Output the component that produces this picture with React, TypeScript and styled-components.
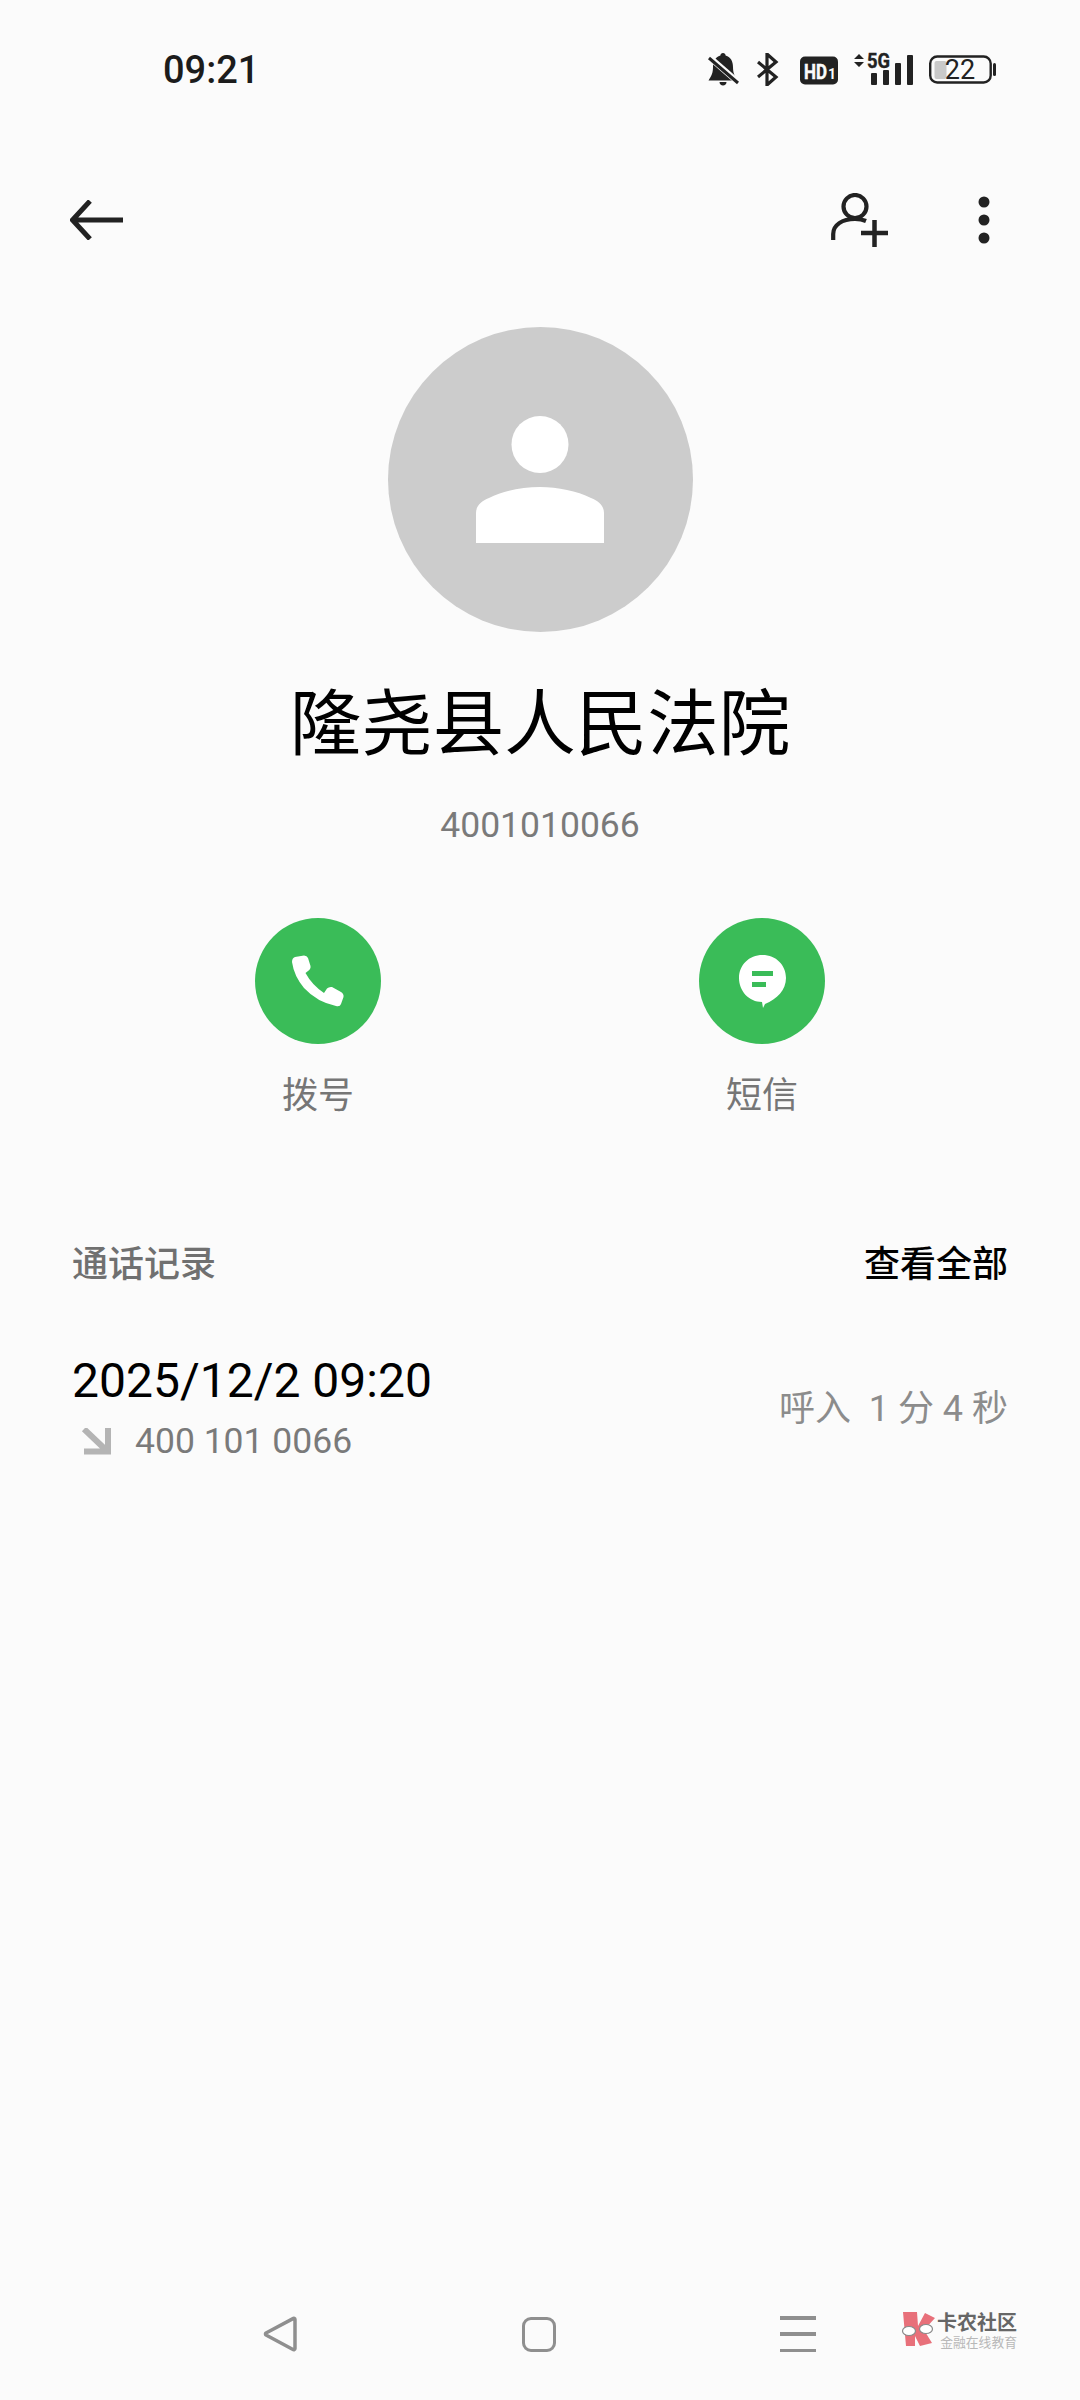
import React from 'react';
import styled, { createGlobalStyle } from 'styled-components';

const GlobalStyle = createGlobalStyle`
  html, body {
    margin: 0;
    padding: 0;
    background: #fbfbfb;
  }
  * {
    box-sizing: border-box;
  }
`;

const FONT = `Roboto, "Noto Sans CJK SC", sans-serif`;

const Page = styled.div`
  width: 1080px;
  height: 2400px;
  display: flex;
  flex-direction: column;
  background: #fbfbfb;
  font-family: ${FONT};
  overflow: hidden;
`;

const StatusBar = styled.div`
  height: 138px;
  flex: none;
  display: flex;
  align-items: center;
  justify-content: space-between;
  padding: 0 84px 0 163px;
`;

const Clock = styled.span`
  font-size: 38px;
  line-height: 42px;
  padding-top: 2px;
  font-weight: 500;
  color: #1c1c1c;
`;

const StatusIcons = styled.div`
  display: flex;
  align-items: center;
  gap: 16px;
`;

const Toolbar = styled.div`
  height: 164px;
  flex: none;
  display: flex;
  align-items: center;
  padding: 0 90px 0 70px;
`;

const ToolbarRight = styled.div`
  margin-left: auto;
  display: flex;
  align-items: center;
  gap: 90px;
`;

const Profile = styled.div`
  display: flex;
  flex-direction: column;
  align-items: center;
  padding-top: 25px;
`;

const Avatar = styled.div`
  width: 305px;
  height: 305px;
  border-radius: 50%;
  background: #cccccc;
  display: flex;
  align-items: center;
  justify-content: center;
`;

const Name = styled.h1`
  margin: 43px 0 0;
  font-size: 71.5px;
  line-height: 100px;
  font-weight: 400;
  color: #000;
`;

const Phone = styled.div`
  margin-top: 25px;
  font-size: 35.5px;
  line-height: 50px;
  color: #7a7a7a;
`;

const Actions = styled.div`
  margin-top: 68px;
  display: grid;
  grid-template-columns: 126px 126px;
  justify-content: center;
  column-gap: 318px;
`;

const Action = styled.div`
  display: flex;
  flex-direction: column;
  align-items: center;
  gap: 27px;
`;

const ActionCircle = styled.div`
  width: 126px;
  height: 126px;
  border-radius: 50%;
  background: #3abc58;
  display: flex;
  align-items: center;
  justify-content: center;
`;

const ActionLabel = styled.span`
  font-size: 36px;
  line-height: 50px;
  color: #767676;
`;

const Section = styled.div`
  margin-top: 119px;
  padding: 0 72px;
`;

const SectionHead = styled.div`
  display: flex;
  justify-content: space-between;
  font-size: 36px;
  line-height: 50px;
`;

const SectionTitle = styled.span`
  color: #707070;
  font-weight: 500;
`;

const SeeAll = styled.span`
  color: #000;
  font-weight: 500;
`;

const CallRow = styled.div`
  margin-top: 61px;
  display: flex;
  align-items: center;
  justify-content: space-between;
`;

const CallInfo = styled.div`
  display: flex;
  flex-direction: column;
  gap: 5px;
`;

const CallTime = styled.div`
  font-size: 48px;
  line-height: 60px;
  color: #000;
`;

const CallNumber = styled.div`
  display: flex;
  align-items: center;
  gap: 24px;
  padding-left: 9px;
  font-size: 35.5px;
  line-height: 50px;
  color: #7a7a7a;
`;

const CallMeta = styled.div`
  font-size: 36px;
  line-height: 50px;
  color: #8c8c8c;
  white-space: pre;
`;

const Spacer = styled.div`
  flex: 1;
`;

const NavBar = styled.div`
  position: relative;
  height: 132px;
  flex: none;
  display: flex;
  align-items: center;
  padding-left: 263px;
  gap: 224px;
`;

const NavBack = styled.svg`
  width: 35px;
  height: 36px;
`;

const NavHome = styled.div`
  width: 34px;
  height: 35px;
  border: 3.5px solid #8f8f8f;
  border-radius: 9px;
`;

const NavMenu = styled.div`
  width: 36px;
  height: 36px;
  display: flex;
  flex-direction: column;
  justify-content: space-between;
`;

const NavMenuLine = styled.div`
  height: 3.5px;
  background: #8f8f8f;
`;

const Watermark = styled.div`
  position: absolute;
  left: 900px;
  top: 44px;
  display: flex;
  gap: 2px;
`;

const WatermarkText = styled.div`
  display: flex;
  flex-direction: column;
  align-items: flex-end;
  gap: 2px;
`;

const WatermarkName = styled.span`
  font-size: 20px;
  line-height: 22px;
  font-weight: 700;
  color: #666;
`;

const WatermarkSlogan = styled.span`
  font-size: 12.8px;
  line-height: 13px;
  color: #b8b8b8;
`;

function BellOffIcon() {
  return (
    <svg width="33" height="33" viewBox="0 0 33 33">
      <path
        d="M15 0c1.5 0 2.6 1 2.6 2.6C23 4 25 9 25 14c0 6 1.5 9 4.5 13.5H0.5C3.5 23 5 20 5 14 5 9 7 4 12.4 2.6 12.4 1 13.5 0 15 0z"
        fill="#222"
      />
      <path d="M11.5 29h7c0 2-1.5 3.5-3.5 3.5s-3.500-1.500-3.500-3.500z" fill="#222" />
      <path d="M0 3l31 27" stroke="#fbfbfb" strokeWidth="6" />
      <path d="M1 5l29 25" stroke="#222" strokeWidth="3" />
    </svg>
  );
}

function BluetoothIcon() {
  return (
    <svg width="27" height="33" viewBox="0 0 27 33">
      <path d="M1 9l18 15-9 8V1l9 8L1 24" fill="none" stroke="#222" strokeWidth="3.2" />
    </svg>
  );
}

function HdIcon() {
  return (
    <svg width="38" height="33" viewBox="0 0 38 33">
      <rect x="0" y="3.500" width="38" height="28" rx="5" fill="#222" />
      <text x="4" y="25.500" fontFamily="Roboto" fontWeight="700" fontSize="21" fill="#fbfbfb" stroke="#fbfbfb" strokeWidth="0.5" textLength="23" lengthAdjust="spacingAndGlyphs">
        HD
      </text>
      <text x="28" y="25.500" fontFamily="Roboto" fontWeight="700" fontSize="14" fill="#fbfbfb">
        1
      </text>
    </svg>
  );
}

function SignalIcon() {
  return (
    <svg width="59" height="41" viewBox="0 -4 59 41">
      <path d="M5 1l5 5H0zM5 14l5-5H0z" fill="#222" />
      <text x="13" y="15" fontFamily="Roboto" fontWeight="700" fontSize="20" fill="#222" stroke="#222" strokeWidth="0.4" textLength="23" lengthAdjust="spacingAndGlyphs">
        5G
      </text>
      <rect x="17" y="20" width="6" height="12" fill="#222" rx="1" />
      <rect x="29" y="17" width="6" height="15" fill="#222" rx="1" />
      <rect x="41" y="10" width="6" height="22" fill="#222" rx="1" />
      <rect x="53" y="2" width="6" height="30" fill="#222" rx="1" />
    </svg>
  );
}

function BatteryIcon() {
  return (
    <svg width="67" height="33" viewBox="0 0 67 33">
      <rect x="1.200" y="3.500" width="60.500" height="26" rx="7" fill="none" stroke="#222" strokeWidth="2.400" />
      <rect x="5.500" y="8" width="12" height="18" rx="2" fill="#c9c9c9" />
      <rect x="64" y="10" width="3" height="13" rx="1.500" fill="#222" />
      <text x="31" y="26" textAnchor="middle" fontFamily="Roboto" fontSize="27" fill="#222">
        22
      </text>
    </svg>
  );
}

function BackIcon() {
  return (
    <svg width="54" height="40" viewBox="0 0 54 40">
      <path d="M20 1L2.500 20 20 39M3 20h50" fill="none" stroke="#222" strokeWidth="5" />
    </svg>
  );
}

function AddContactIcon() {
  return (
    <svg width="57" height="54" viewBox="0 0 57 54">
      <circle cx="24" cy="13.500" r="11.500" fill="none" stroke="#222" strokeWidth="4.200" />
      <path d="M2.200 47v-6C2.200 32 11 26 24 26c4 0 8 .7 11 2" fill="none" stroke="#222" strokeWidth="4.200" />
      <path d="M30 40h27M43.500 27v27" fill="none" stroke="#222" strokeWidth="4.500" />
    </svg>
  );
}

function MoreIcon() {
  return (
    <svg width="12" height="48" viewBox="0 0 12 48">
      <circle cx="6" cy="6" r="5.500" fill="#222" />
      <circle cx="6" cy="24" r="5.500" fill="#222" />
      <circle cx="6" cy="42" r="5.500" fill="#222" />
    </svg>
  );
}

function PersonIcon() {
  return (
    <svg width="128" height="127" viewBox="0 0 128 127">
      <circle cx="64" cy="28.500" r="28.500" fill="#fff" />
      <path d="M0 127V97C0 90 5 85 13 82c14-7 33-11 51-11s37 4 51 11c8 3 13 8 13 15v30z" fill="#fff" />
    </svg>
  );
}

function CallIcon() {
  return (
    <svg width="52" height="52" viewBox="0 0 52 52">
      <path
        d="M3 2L12 .5Q15 .5 16 3L18.500 11Q19 14 16 16L13.500 18Q20 30 32 38L35 33.500Q37 31.500 40 32L49 37Q52 39 51.500 42L49 49Q48 52 44 51Q25 47 12 33Q2 21 0 7Q0 3 3 2Z"
        fill="#fff"
      />
    </svg>
  );
}

function MessageIcon() {
  return (
    <svg width="47" height="53" viewBox="0 0 47 53">
      <path
        d="M23.500 0C37 0 47 10 47 23C47 35 38 44 26 49L24 53L23 47C10 47 0 36 0 23C0 10 10 0 23.500 0Z"
        fill="#fff"
      />
      <rect x="13" y="16" width="21" height="5" fill="#3abc58" />
      <rect x="13" y="27" width="14" height="5" fill="#3abc58" />
    </svg>
  );
}

function IncomingIcon() {
  return (
    <svg width="30" height="27" viewBox="0 0 30 27">
      <path d="M3 1L25 22M3 23.500h24V0" fill="none" stroke="#b4b4b4" strokeWidth="6" />
    </svg>
  );
}

function WatermarkLogo() {
  return (
    <svg width="35" height="35" viewBox="0 0 35 35">
      <path d="M3 0h14l1 14 7-13 10 5-11 12 8 13-12 3-5-10v10L6 34z" fill="#e8707a" />
      <ellipse cx="9" cy="19" rx="6.500" ry="4.500" fill="#fff" stroke="#8a8a8a" strokeWidth="1.200" />
      <ellipse cx="26" cy="17" rx="6.500" ry="4.500" fill="#fff" stroke="#8a8a8a" strokeWidth="1.200" />
    </svg>
  );
}

export default function App() {
  return (
    <>
      <GlobalStyle />
      <Page>
        <StatusBar>
          <Clock>09:21</Clock>
          <StatusIcons>
            <BellOffIcon />
            <BluetoothIcon />
            <HdIcon />
            <SignalIcon />
            <BatteryIcon />
          </StatusIcons>
        </StatusBar>

        <Toolbar>
          <BackIcon />
          <ToolbarRight>
            <AddContactIcon />
            <MoreIcon />
          </ToolbarRight>
        </Toolbar>

        <Profile>
          <Avatar>
            <PersonIcon />
          </Avatar>
          <Name>隆尧县人民法院</Name>
          <Phone>4001010066</Phone>
          <Actions>
            <Action>
              <ActionCircle>
                <CallIcon />
              </ActionCircle>
              <ActionLabel>拨号</ActionLabel>
            </Action>
            <Action>
              <ActionCircle>
                <MessageIcon />
              </ActionCircle>
              <ActionLabel>短信</ActionLabel>
            </Action>
          </Actions>
        </Profile>

        <Section>
          <SectionHead>
            <SectionTitle>通话记录</SectionTitle>
            <SeeAll>查看全部</SeeAll>
          </SectionHead>
          <CallRow>
            <CallInfo>
              <CallTime>2025/12/2 09:20</CallTime>
              <CallNumber>
                <IncomingIcon />
                400 101 0066
              </CallNumber>
            </CallInfo>
            <CallMeta>呼入  1 分 4 秒</CallMeta>
          </CallRow>
        </Section>

        <Spacer />

        <NavBar>
          <NavBack viewBox="0 0 35 36">
            <path d="M32 3.500a1.200 1.200 0 0 0-2-.9L3 17a1.200 1.200 0 0 0 0 2l27 14.500a1.200 1.200 0 0 0 2-.9z" fill="none" stroke="#8f8f8f" strokeWidth="3.500" strokeLinejoin="round" />
          </NavBack>
          <NavHome />
          <NavMenu>
            <NavMenuLine />
            <NavMenuLine />
            <NavMenuLine />
          </NavMenu>
          <Watermark>
            <WatermarkLogo />
            <WatermarkText>
              <WatermarkName>卡农社区</WatermarkName>
              <WatermarkSlogan>金融在线教育</WatermarkSlogan>
            </WatermarkText>
          </Watermark>
        </NavBar>
      </Page>
    </>
  );
}
